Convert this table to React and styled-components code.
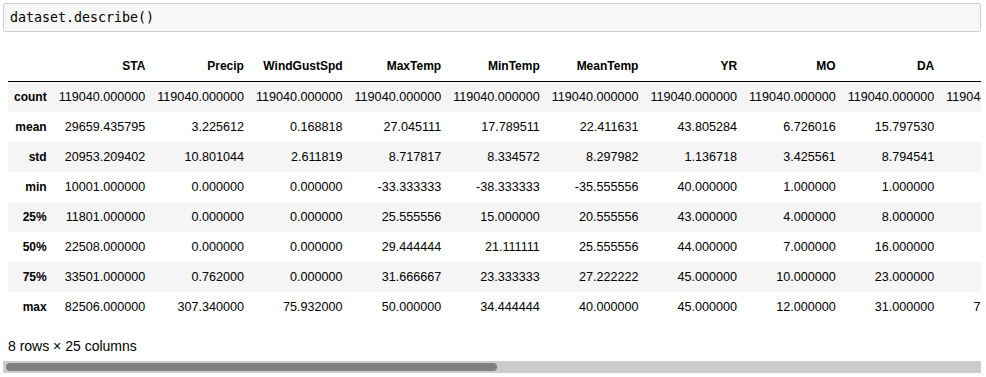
import React from 'react';
import styled, { createGlobalStyle } from 'styled-components';

const GlobalStyle = createGlobalStyle`
  body {
    margin: 0;
    background: #ffffff;
    color: #000000;
    font-family: "Liberation Sans", Arial, sans-serif;
  }
`;

const Cell = styled.div`
  padding: 3px 5px 0 3px;
`;

const InputBox = styled.div`
  border: 1px solid #cfcfcf;
  border-radius: 2px;
  background: #f7f7f7;
  padding: 0 6px;
  line-height: 27px;
  font-family: "DejaVu Sans Mono", "Liberation Mono", monospace;
  font-size: 13.3px;
  color: #000;
`;

const OutputArea = styled.div`
  margin-top: 19px;
  overflow: hidden;
`;

const Viewport = styled.div`
  padding-left: 5px;
  overflow: hidden;
`;

// native scrollbars are hidden in the capture, so the bar is drawn by hand
const ScrollTrack = styled.div`
  height: 12px;
  background: #cccccc;
  padding: 2px 3px;
  box-sizing: border-box;
`;

const ScrollThumb = styled.div`
  width: ${p => p.$width}px;
  height: 8px;
  border-radius: 4px;
  background: #7f807f;
`;

const Frame = styled.table`
  border-collapse: collapse;
  border-spacing: 0;
  font-size: 12px;
  white-space: nowrap;
`;

const HeadCell = styled.th`
  padding: 8px 6px 7px;
  line-height: 15px;
  text-align: right;
  font-weight: bold;
  border-bottom: 1px solid #000;
  vertical-align: middle;
`;

const Row = styled.tr`
  background: ${p => (p.$striped ? '#f5f5f5' : '#ffffff')};
`;

const IndexCell = styled.th`
  padding: 8px 6px;
  line-height: 14px;
  text-align: right;
  font-weight: bold;
  vertical-align: middle;
`;

const ValueCell = styled.td`
  padding: 8px 6px;
  line-height: 14px;
  text-align: right;
  font-size: 12.6px;
  vertical-align: middle;
`;

const Summary = styled.p`
  margin: 16px 0 0;
  padding-bottom: 6px;
  font-size: 14px;
  line-height: 17px;
`;

const stats = ['count', 'mean', 'std', 'min', '25%', '50%', '75%', 'max'];

const zeros = ['0.000000', '0.000000', '0.000000', '0.000000', '0.000000', '0.000000', '0.000000'];

const columns = [
  ['STA', ['119040.000000', '29659.435795', '20953.209402', '10001.000000', '11801.000000', '22508.000000', '33501.000000', '82506.000000']],
  ['Precip', ['119040.000000', '3.225612', '10.801044', '0.000000', '0.000000', '0.000000', '0.762000', '307.340000']],
  ['WindGustSpd', ['119040.000000', '0.168818', '2.611819', '0.000000', '0.000000', '0.000000', '0.000000', '75.932000']],
  ['MaxTemp', ['119040.000000', '27.045111', '8.717817', '-33.333333', '25.555556', '29.444444', '31.666667', '50.000000']],
  ['MinTemp', ['119040.000000', '17.789511', '8.334572', '-38.333333', '15.000000', '21.111111', '23.333333', '34.444444']],
  ['MeanTemp', ['119040.000000', '22.411631', '8.297982', '-35.555556', '20.555556', '25.555556', '27.222222', '40.000000']],
  ['YR', ['119040.000000', '43.805284', '1.136718', '40.000000', '43.000000', '44.000000', '45.000000', '45.000000']],
  ['MO', ['119040.000000', '6.726016', '3.425561', '1.000000', '4.000000', '7.000000', '10.000000', '12.000000']],
  ['DA', ['119040.000000', '15.797530', '8.794541', '1.000000', '8.000000', '16.000000', '23.000000', '31.000000']],
  ['PRCP', ['119040.000000', '0.1118', '0.3011', '0.00', '0.00', '0.00', '0.00', '78.000000']],
  ['...', ['...', '...', '...', '...', '...', '...', '...', '...']],
  ['FB', ['1122.000000', ...zeros]],
  ['FTI', ['1122.000000', ...zeros]],
  ['ITH', ['1122.000000', ...zeros]],
  ['PGT', ['1025.000000', '12.085542', '5.731812', '0.000000', '8.500000', '11.600000', '15.000000', '75.000000']],
  ['SD3', ['1122.000000', ...zeros]],
  ['RHX', ['1122.000000', ...zeros]],
  ['RHN', ['1122.000000', ...zeros]],
  ['RVG', ['1122.000000', ...zeros]],
  ['WTE', ['1122.000000', ...zeros]],
  ['MEA', ['1122.000000', ...zeros]],
];

const App = () => {
  return (
    <Cell>
      <GlobalStyle />
      <InputBox>dataset.describe()</InputBox>
      <OutputArea>
        <Viewport>
          <Frame>
            <thead>
              <tr>
                <HeadCell />
                {columns.map(([name]) => (
                  <HeadCell key={name}>{name}</HeadCell>
                ))}
              </tr>
            </thead>
            <tbody>
              {stats.map((stat, i) => (
                <Row key={stat} $striped={i % 2 === 0}>
                  <IndexCell>{stat}</IndexCell>
                  {columns.map(([name, values]) => (
                    <ValueCell key={name}>{values[i]}</ValueCell>
                  ))}
                </Row>
              ))}
            </tbody>
          </Frame>
          <Summary>8 rows × 25 columns</Summary>
        </Viewport>
        <ScrollTrack>
          <ScrollThumb $width={491} />
        </ScrollTrack>
      </OutputArea>
    </Cell>
  );
};

export default App;
